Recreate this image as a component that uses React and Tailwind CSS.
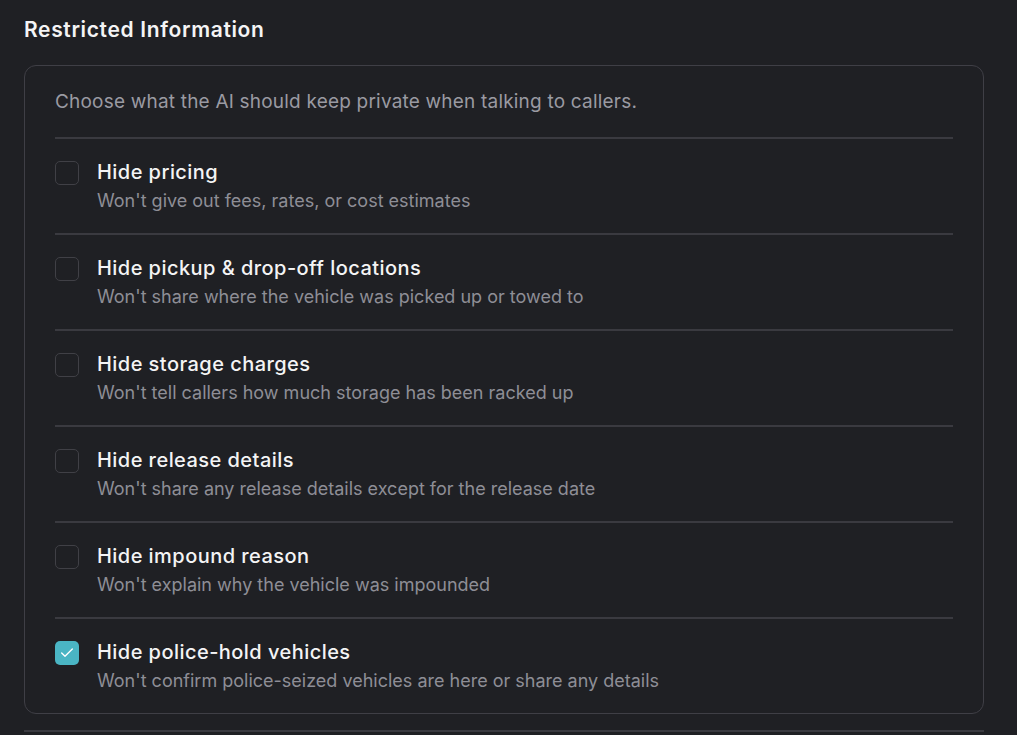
import { Check } from 'lucide-react';

const items = [
  { title: 'Hide pricing', desc: "Won't give out fees, rates, or cost estimates", checked: false },
  { title: 'Hide pickup & drop-off locations', desc: "Won't share where the vehicle was picked up or towed to", checked: false },
  { title: 'Hide storage charges', desc: "Won't tell callers how much storage has been racked up", checked: false },
  { title: 'Hide release details', desc: "Won't share any release details except for the release date", checked: false },
  { title: 'Hide impound reason', desc: "Won't explain why the vehicle was impounded", checked: false },
  { title: 'Hide police-hold vehicles', desc: "Won't confirm police-seized vehicles are here or share any details", checked: true },
];

const App = () => {
  return (
    <div className="min-h-screen bg-[#1f2024] pl-6 pr-[33px] pt-4 font-['Inter',sans-serif] text-white">
      <h2 className="text-[21px] font-semibold leading-7 tracking-[0.65px] text-[#f4f4f5]">Restricted Information</h2>

      <div className="mt-[21px] rounded-xl border border-[#3f3f46] px-[30px] pt-6 pb-0">
        <p className="text-[19px] leading-6 tracking-[0.2px] text-[#9a9aa2]">
          Choose what the AI should keep private when talking to callers.
        </p>

        <div className="mt-[23px]">
          {items.map((item, i) => (
            <div key={i} className="flex items-start gap-[18px] border-t-2 border-[#3a3a40] pt-[19px] pb-[20px]">
              <div
                className={`mt-[3px] flex h-6 w-6 shrink-0 items-center justify-center rounded-[5px] ${
                  item.checked ? 'bg-[#4ab5c4]' : 'border border-[#404046]'
                }`}
              >
                {item.checked && <Check className="h-4 w-4 text-white" strokeWidth={2} />}
              </div>
              <div>
                <div className="text-[20px] font-medium leading-7 tracking-[0.45px] text-[#f4f4f5]">{item.title}</div>
                <div className="mt-[3px] text-[18px] leading-6 text-[#8e8e96]">{item.desc}</div>
              </div>
            </div>
          ))}
        </div>
      </div>

      <div className="mt-[16px] border-t-2 border-[#3a3a40]" />
    </div>
  );
};

export default App;
